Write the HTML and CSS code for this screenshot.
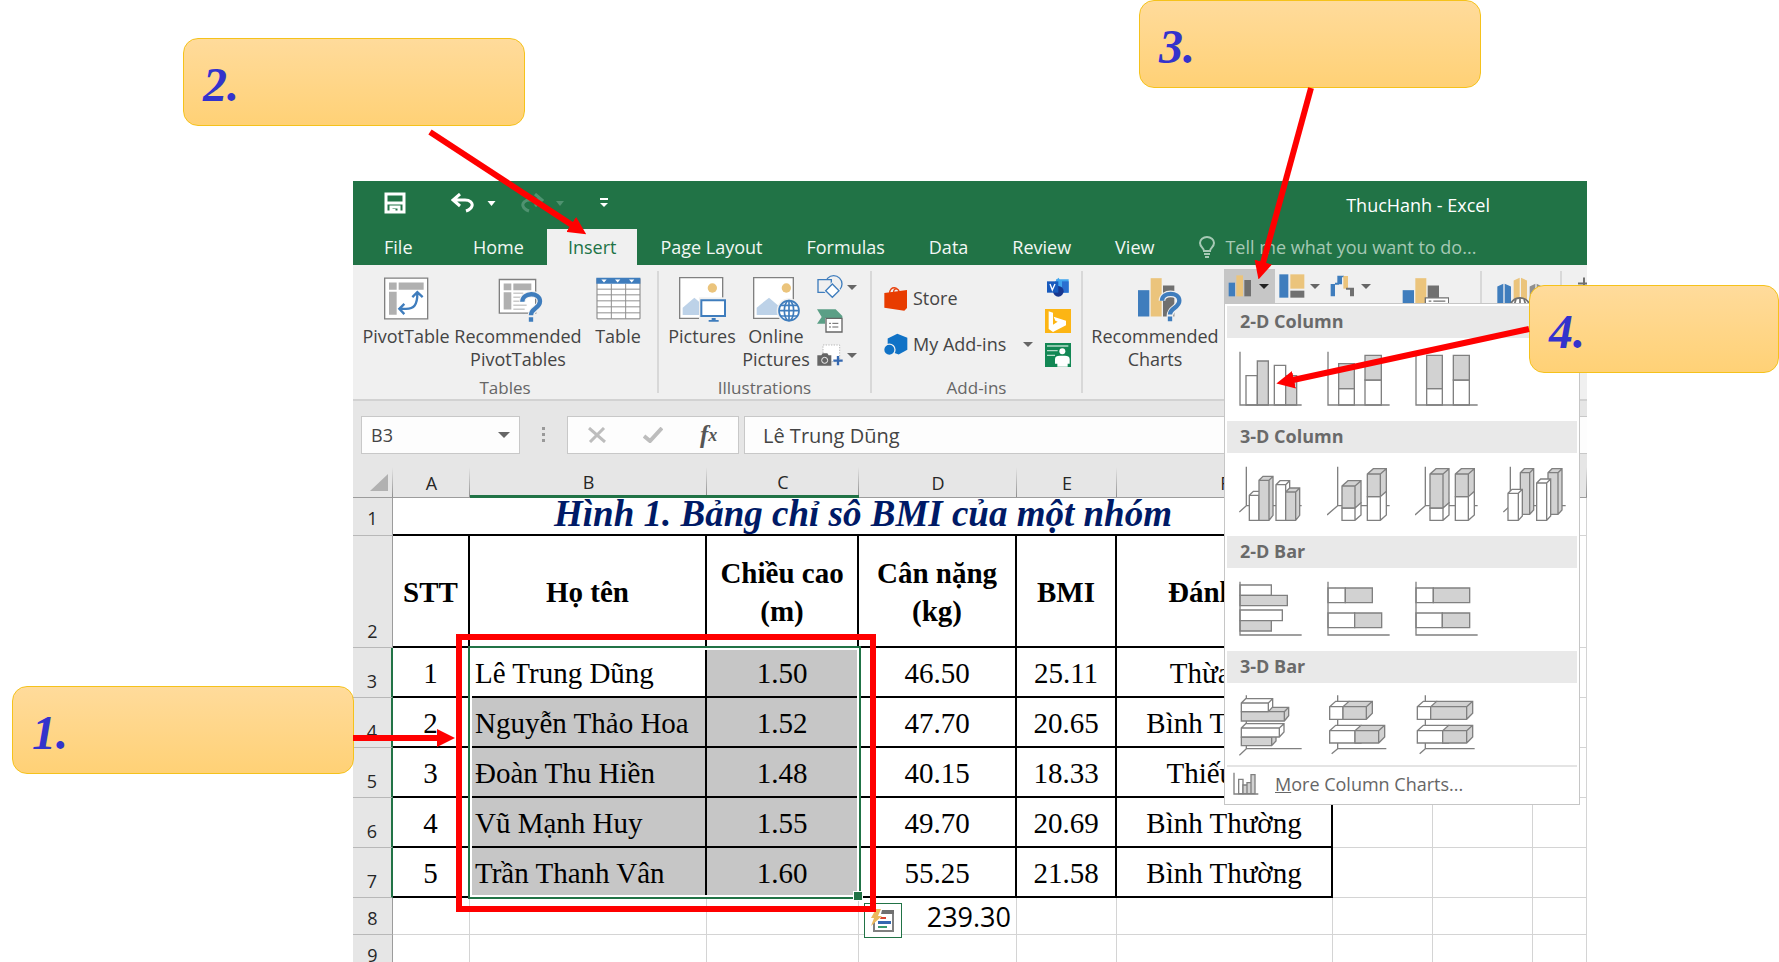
FILE: index.html
```html
<!DOCTYPE html>
<html lang="vi">
<head>
<meta charset="utf-8">
<title>ThucHanh - Excel</title>
<link rel="stylesheet" href="styles.css">
</head>
<body>
<main class="slide">
<section class="app">
  <header class="titlebar">
    <div class="quick">
      <button class="q-save" aria-label="Save"><svg width="22" height="22" viewBox="0 0 22 22" fill="none" stroke="#fff" stroke-width="3"><path d="M2 2h18v18H2zM2 11h18M7 20v-5h8v5M10 20v-3"/></svg></button>
      <button class="q-undo" aria-label="Undo"><svg width="24" height="20" viewBox="0 0 24 20" fill="none" stroke="#fff" stroke-width="3"><path d="M9 1L2 7l7 6M2 7h12c5 0 8 3 7 6-1 3-3 4-6 5"/></svg></button>
      <button class="q-drop" aria-label="Undo list"><svg width="9" height="5" viewBox="0 0 8 5"><path fill="#fff" d="M0 0h8L4 5z"/></svg></button>
      <button class="q-redo" aria-label="Redo"><svg width="24" height="20" viewBox="0 0 24 20" fill="none" stroke="#4f9270" stroke-width="3"><path d="M15 1l7 6-7 6M22 7H10C5 7 2 10 3 13c1 3 3 4 6 5"/></svg></button>
      <button class="q-drop" aria-label="Redo list"><svg width="8" height="5" viewBox="0 0 8 5"><path fill="#4f9270" d="M0 0h8L4 5z"/></svg></button>
      <button class="q-more" aria-label="Customize toolbar"><svg width="8" height="10" viewBox="0 0 8 10"><path fill="#fff" d="M0 0h8v2H0zM0 5h8L4 9z"/></svg></button>
    </div>
    <h1 class="doc">ThucHanh - Excel</h1>
  </header>
  <nav class="tabs">
    <button class="tab file">File</button>
    <button class="tab">Home</button>
    <button class="tab active">Insert</button>
    <button class="tab">Page Layout</button>
    <button class="tab">Formulas</button>
    <button class="tab">Data</button>
    <button class="tab">Review</button>
    <button class="tab">View</button>
    <label class="tell"><svg width="16" height="22" viewBox="0 0 16 22" fill="none" stroke="#a6c9b5" stroke-width="2"><path d="M5 15c0-3-4-4-4-8a7 6 0 0 1 14 0c0 4-4 5-4 8zM5 18h6M6 21h4"/></svg><input type="text" aria-label="Tell me what you want to do" placeholder="Tell me what you want to do..."></label>
  </nav>

  <div class="ribbon">
    <section class="group g-tables">
      <div class="tools">
        <button class="big w94"><svg width="45" height="44" viewBox="97 303 135 132"><path fill="#fff" stroke="#808080" stroke-width="4" d="M99 305h129v122H99z"/><path fill="#b0b0b0" d="M112 318h23v22h-23zM141 318h75v22h-75zM112 346h23v69h-23z"/><path fill="none" stroke="#3f7dbd" stroke-width="7" d="M145 397h18c24 0 34-12 34-45M158 382l-15 15 15 16M182 362l15-15 16 15"/></svg><span>PivotTable</span></button>
        <button class="big w130"><svg width="49" height="44" viewBox="435 305 147 132"><path fill="#fff" stroke="#808080" stroke-width="4" d="M451 311h109v101H451z"/><path fill="#b0b0b0" d="M464 323h23v20h-23zM493 323h54v20h-54zM464 349h23v52h-23z"/><path stroke="#b0b0b0" stroke-width="3" d="M493 352h30M493 364h25M493 376h28M493 388h40M493 400h34"/><path fill="none" stroke="#f0f0f0" stroke-width="20" d="M520 378c0-30 54-30 54-2 0 22-28 20-28 44M546 420v17"/><path fill="none" stroke="#3f7dbd" stroke-width="13" d="M520 378c0-30 53-30 53-2 0 22-27 20-27 42M546 424v14"/></svg><span>Recommended<br>PivotTables</span></button>
        <button class="big w70"><svg width="45" height="44" viewBox="739 303 135 132"><path fill="#fff" stroke="#808080" stroke-width="3" d="M742 306h129v121H742z"/><path stroke="#909090" stroke-width="3" d="M742 338h129M742 355h129M742 373h129M742 391h129M742 409h129M785 322v105M828 322v105"/><path fill="#3f7dbd" d="M740 304h132v18H740z"/><path fill="#fff" d="M755 309h16l-8 9zM796 309h16l-8 9zM838 309h16l-8 9z"/></svg><span>Table</span></button>
      </div>
      <h2>Tables</h2>
    </section>

    <section class="group g-illus">
      <div class="tools">
        <button class="big w80"><svg width="48" height="45" viewBox="985 303 144 135"><path fill="#fff" stroke="#808080" stroke-width="4" d="M990 305h129v122H990z"/><circle cx="1088" cy="336" r="14" fill="#ebc47c"/><path fill="#bdd2e8" d="M999 417v-22l35-30 30 26v26z"/><path fill="#f0f0f0" d="M1048 364h84v74h-84z"/><path fill="#fff" stroke="#3f7dbd" stroke-width="6" d="M1055 373h71v47h-71z"/><path fill="#3f7dbd" d="M1086 426h12v6h9v5h-30v-5h9z"/></svg><span>Pictures</span></button>
        <button class="big w68"><svg width="48" height="45" viewBox="1205 303 144 135"><path fill="#fff" stroke="#808080" stroke-width="4" d="M1210 305h119v122h-119z"/><circle cx="1308" cy="336" r="14" fill="#ebc47c"/><path fill="#bdd2e8" d="M1219 417v-22l37-30 30 26v26z"/><circle cx="1316" cy="404" r="37" fill="#f0f0f0"/><g fill="#fff" stroke="#3f7dbd" stroke-width="5"><circle cx="1316" cy="404" r="30"/><ellipse cx="1316" cy="404" rx="14" ry="30"/><path d="M1286 404h60M1290 388h52M1290 420h52M1316 374v60"/></g></svg><span>Online<br>Pictures</span></button>
        <div class="smalls">
          <button aria-label="Shapes"><svg width="26" height="24" viewBox="110 295 78 72" fill="#f0f0f0" stroke="#3f7dbd" stroke-width="4"><circle cx="160" cy="322" r="25"/><path d="M113 309h40v38h-40z"/><path stroke="#f0f0f0" stroke-width="10" d="M156 322l20 20-20 20-20-20z"/><path fill="#fff" d="M156 322l20 20-20 20-20-20z"/></svg><i class="caret"></i></button>
          <button aria-label="SmartArt"><svg width="26" height="24" viewBox="110 397 78 72"><path fill="#5b9f86" d="M110 398h56l20 20v6h-52v17h-24l14-20z"/><path fill="#fff" stroke="#666" stroke-width="4" d="M137 425h48v41h-48z"/><path stroke="#666" stroke-width="3" d="M146 440h6M156 440h18M146 451h6M156 451h18"/></svg></button>
          <button aria-label="Screenshot"><svg width="26" height="24" viewBox="110 505 78 68"><path fill="#fff" stroke="#999" stroke-width="2" stroke-dasharray="4 4" d="M128 509h50v50h-50z"/><path fill="#666" d="M111 540h12l4-6h14l4 6h8v31h-42z"/><circle cx="133" cy="555" r="9" fill="#666" stroke="#f0f0f0" stroke-width="3"/><path stroke="#3568b0" stroke-width="7" d="M159 556h28M173 542v28"/></svg><i class="caret"></i></button>
        </div>
      </div>
      <h2>Illustrations</h2>
    </section>

    <section class="group g-addins">
      <div class="tools">
        <div class="pair">
          <button><svg width="24" height="25" viewBox="311 328 72 75"><path fill="none" stroke="#e8430f" stroke-width="4" d="M328 350c0-24 28-20 28-2M340 346c0-14 16-12 17 2"/><path fill="#e83c00" d="M312 349l68-9v54l-8 8-60-9z"/></svg><span>Store</span></button>
          <button><svg width="24" height="23" viewBox="311 470 72 66"><path fill="#1072c6" d="M351 471l30 12v36l-26 14-33-12v-36z"/><circle cx="327" cy="519" r="17" fill="#1072c6" stroke="#f0f0f0" stroke-width="4"/></svg><span>My Add-ins</span><i class="caret"></i></button>
        </div>
        <div class="smalls">
          <button aria-label="Visio"><svg width="26" height="24" viewBox="795 295 78 72"><path fill="#41a5ee" d="M824 317l11-14 11 14zM828 308h38v40h-38z"/><path fill="#2b6fd0" d="M846 314h20v34h-20z"/><circle cx="835" cy="344" r="16" fill="#17378f"/><path fill="#185abd" d="M801 314h34v34h-34z"/><path fill="none" stroke="#fff" stroke-width="4" d="M810 322l7 18 8-18"/></svg></button>
          <button aria-label="Bing Maps"><svg width="26" height="24" viewBox="795 397 78 72"><path fill="#fcb514" d="M795 397h78v72h-78z"/><path fill="#fff" d="M806 404l13 4v36l14-9-7-3-5-12 37 12v14l-39 20-13-9z"/></svg></button>
          <button aria-label="People Graph"><svg width="26" height="24" viewBox="795 498 78 72"><path fill="#128754" d="M795 498h78v72h-78z"/><path stroke="#b5dbc9" stroke-width="4" d="M801 507h64M801 521h32M801 535h24"/><circle cx="847" cy="523" r="9" fill="#fff"/><path fill="#fff" d="M825 560v-14c0-8 6-10 14-10h16c8 0 14 3 14 10v14h-6v9h-31v-9z"/></svg></button>
        </div>
      </div>
      <h2>Add-ins</h2>
    </section>

    <section class="group g-charts">
      <div class="tools">
        <button class="big w130"><svg width="54" height="44" viewBox="1042 307 162 132"><path fill="#3f7dbd" d="M1072 345h34v79h-34z"/><path fill="#ebc47c" d="M1110 309h33v115h-33z"/><path fill="#707070" d="M1147 331h34v93h-34z"/><path fill="none" stroke="#f0f0f0" stroke-width="20" d="M1144 377c0-28 52-28 52 0 0 22-28 20-28 44M1168 421v18"/><path fill="none" stroke="#3f7dbd" stroke-width="13" d="M1144 377c0-28 52-28 52 0 0 22-28 20-28 41M1168 424v14"/></svg><span>Recommended<br>Charts</span></button>
        <div class="chartbtns">
          <div class="holder">
            <button class="cb open" aria-label="Column chart"><svg width="26" height="24" viewBox="147 295 78 72"><path fill="#3f7dbd" d="M149 321h19v41h-19z"/><path fill="#ebc47c" d="M172 299h20v63h-20z"/><path fill="#707070" d="M196 313h20v49h-20z"/></svg><i class="caret dark"></i></button>
            <div class="menu">
              <h3>2-D Column</h3>
              <div class="opts ico">
                <button aria-label="Clustered column"><svg width="63" height="55" viewBox="177 528 189 165"><path class="w" d="M198 602h34v88h-34zM283 571h34v119h-34z"/><path class="g" d="M232 558h33v132h-33zM317 602h33v88h-33z"/><path class="l" d="M180 530v160h185"/></svg></button>
                <button aria-label="Stacked column"><svg width="63" height="55" viewBox="440 528 189 165"><path class="w" d="M475 641h47v49h-47zM554 615h49v75h-49z"/><path class="g" d="M475 566h47v75h-47zM554 541h49v74h-49z"/><path class="l" d="M443 530v160h185"/></svg></button>
                <button aria-label="100% stacked column"><svg width="63" height="55" viewBox="703 528 189 165"><path class="w" d="M738 641h47v49h-47zM818 615h48v75h-48z"/><path class="g" d="M738 541h47v100h-47zM818 541h48v74h-48z"/><path class="l" d="M706 530v160h185"/></svg></button>
              </div>
              <h3>3-D Column</h3>
              <div class="opts ico">
                <button aria-label="3-D clustered column"><svg width="63" height="55" viewBox="87 197 189 165"><path class="l" d="M109 199v117l-21 19M109 316h166"/><path class="w" d="M118 285l12-12h29v75l-12 12h-29zM118 285h29v75M147 285l12-12"/><path class="g" d="M147 240l12-12h30v117l-12 15h-30zM147 240h30v120M177 240l12-12"/><path class="w" d="M198 253l12-12h29v107l-12 12h-29zM198 253h29v107M227 253l12-12"/><path class="g" d="M227 275l12-12h30v82l-12 15h-30zM227 275h30v85M257 275l12-12"/></svg></button>
                <button aria-label="3-D stacked column"><svg width="63" height="55" viewBox="349 197 189 165"><path class="l" d="M381 199v117l-32 28M381 316h156"/><path class="w" d="M394 323l18-16h39v37l-18 16h-39zM394 323h39v37M470 289l18-16h39v71l-18 16h-39zM470 289h39v71"/><path class="g" d="M394 257l18-16h39v66l-18 16h-39zM394 257h39v66M433 257l18-16M470 221l18-16h39v68l-18 16h-39zM470 221h39v68M509 221l18-16"/></svg></button>
                <button aria-label="3-D 100% stacked column"><svg width="63" height="55" viewBox="612 197 189 165"><path class="l" d="M643 199v117l-31 28M643 316h157"/><path class="w" d="M657 323l18-16h39v37l-18 16h-39zM657 323h39v37M733 289l18-16h39v71l-18 16h-39zM733 289h39v71"/><path class="g" d="M657 221l18-16h39v102l-18 16h-39zM657 221h39v102M696 221l18-16M733 221l18-16h39v68l-18 16h-39zM733 221h39v68M772 221l18-16"/></svg></button>
                <button aria-label="3-D column"><svg width="63" height="55" viewBox="875 197 189 165"><path class="l" d="M897 199v117l-21 19M897 316h166"/><path class="g" d="M927 217l12-12h28v124l-12 13h-28zM927 217h28v125M955 217l12-12M1010 217l12-12h30v124l-12 13h-30zM1010 217h30v125M1040 217l12-12"/><path class="w" d="M890 279l12-12h31v80l-12 13h-31zM890 279h31v81M921 279l12-12M976 248l12-12h30v111l-12 13h-30zM976 248h30v112M1006 248l12-12"/></svg></button>
              </div>
              <h3>2-D Bar</h3>
              <div class="opts ico">
                <button aria-label="Clustered bar"><svg width="63" height="55" viewBox="87 541 189 165"><path class="w" d="M90 553h94v31H90zM90 628h127v32H90z"/><path class="g" d="M90 584h142v31H90zM90 660h94v31H90z"/><path class="l" d="M90 543v160h185"/></svg></button>
                <button aria-label="Stacked bar"><svg width="63" height="55" viewBox="349 541 189 165"><path class="w" d="M352 562h52v44h-52zM352 637h80v44h-80z"/><path class="g" d="M404 562h81v44h-81zM432 637h81v44h-81z"/><path class="l" d="M352 543v160h185"/></svg></button>
                <button aria-label="100% stacked bar"><svg width="63" height="55" viewBox="612 541 189 165"><path class="w" d="M615 562h52v44h-52zM615 637h79v44h-79z"/><path class="g" d="M667 562h109v44H667zM694 637h82v44h-82z"/><path class="l" d="M615 543v160h185"/></svg></button>
              </div>
              <h3>3-D Bar</h3>
              <div class="opts ico">
                <button aria-label="3-D clustered bar"><svg width="63" height="61" viewBox="87 162 189 183"><path class="l" d="M109 163v160h166M109 323l-21 20"/><path class="g" d="M94 212l13-13h129v25l-13 16H94zM94 212h129v28M223 212l13-13M94 288l13-13h91v25l-13 14H94zM94 288h91v26M185 288l13-13"/><path class="w" d="M94 186l13-13h81v25l-13 14H94zM94 186h81v26M175 186l13-13M94 261l13-13h115v25l-14 15H94zM94 261h114v27M208 261l14-13"/></svg></button>
                <button aria-label="3-D stacked bar"><svg width="63" height="61" viewBox="349 162 189 183"><path class="l" d="M381 163v160h146M381 323l-18 15"/><path class="w" d="M357 197l18-16h40v54h-58zM357 197h40v38M357 269l18-16h76v53h-94zM357 269h76v37"/><path class="g" d="M397 197l18-16h70v36l-18 18h-70zM397 197h70v38M467 197l18-16M433 269l18-16h71v35l-18 18h-71zM433 269h71v37M504 269l18-16"/></svg></button>
                <button aria-label="3-D 100% stacked bar"><svg width="63" height="61" viewBox="612 162 189 183"><path class="l" d="M643 163v160h148M643 323l-17 15"/><path class="w" d="M619 197l18-16h40v54h-58zM619 197h40v38M619 269l18-16h76v53h-94zM619 269h76v37"/><path class="g" d="M659 197l18-16h108v36l-18 18H659zM659 197h108v38M767 197l18-16M695 269l18-16h72v35l-18 18h-72zM695 269h72v37M767 269l18-16"/></svg></button>
              </div>
              <button class="more ico"><svg width="26" height="24" viewBox="67 398 78 72"><path class="w" d="M84 420h13v43H84z"/><path class="g" d="M97 437h12v26H97zM109 430h12v33h-12zM121 406h12v57h-12z"/><path class="l" d="M70 400v64h73"/></svg><span><u>M</u>ore Column Charts...</span></button>
            </div>
          </div>
          <button class="cb" aria-label="Hierarchy chart"><svg width="26" height="24" viewBox="299 295 78 72"><path fill="#3f7dbd" d="M300 296h27v70h-27z"/><path fill="#ebc47c" d="M333 296h42v43h-42z"/><path fill="#707070" d="M333 345h42v21h-42z"/></svg><i class="caret"></i></button>
          <button class="cb" aria-label="Waterfall chart"><svg width="26" height="24" viewBox="452 295 78 72"><path fill="#3f7dbd" d="M454 325h13v37h-13zM467 321h12v6h-12zM474 300h14v26h-14zM486 300h8v5h-8z"/><path fill="#ebc47c" d="M492 301h14v38h-14z"/><path fill="#707070" d="M500 336h24v26h-12v-20h-12z"/></svg><i class="caret"></i></button>
        </div>
        <button class="big w80" aria-label="PivotChart"><svg width="47" height="44" viewBox="668 307 141 132"><path fill="#3f7dbd" d="M670 345h34v79h-34z"/><path fill="#ebc47c" d="M708 309h33v115h-33z"/><path fill="#707070" d="M745 331h34v93h-34z"/><path fill="#fff" stroke="#707070" stroke-width="4" d="M738 368h70v60h-70z"/><path stroke="#707070" stroke-width="4" d="M748 378h8M762 378h36"/></svg></button>
      </div>
      <h2>Charts</h2>
    </section>

    <section class="group g-tours">
      <div class="tools"><button class="big w70" aria-label="3D Map"><svg width="45" height="44" viewBox="950 303 135 132"><path fill="#3f7dbd" d="M951 330l18-8v100h-18zM973 322l19 8v92h-19z"/><path fill="#ebc47c" d="M1000 312l18-8v80h-18zM1022 304l18 8v72h-18z"/><path fill="#909090" d="M1048 330l17-8v100h-17zM1069 322l16 8v92h-16z"/><circle cx="1019" cy="395" r="31" fill="#fff" stroke="#707070" stroke-width="5"/><path fill="none" stroke="#707070" stroke-width="5" d="M1019 364v62M990 384h58M1007 368c-8 20-8 36 0 54M1031 368c8 20 8 36 0 54"/></svg></button></div>
    </section>
    <section class="group g-spark">
      <div class="tools"><button class="big" aria-label="Sparkline"><svg width="36" height="44" viewBox="0 0 36 44"><path stroke="#707070" stroke-width="2" d="M0 6h36M6 0v14"/></svg></button></div>
    </section>
  </div>

  <div class="formula">
    <label class="namebox"><input type="text" value="B3" aria-label="Name box"><i class="caret wide"></i></label>
    <i class="dots"></i>
    <div class="fx">
      <button aria-label="Cancel"><svg width="18" height="16" viewBox="0 0 18 16"><path fill="none" stroke="#bdbdbd" stroke-width="3" d="M1 1l16 14M16 1L2 15"/></svg></button>
      <button aria-label="Enter"><svg width="20" height="16" viewBox="0 0 20 16"><path fill="none" stroke="#bdbdbd" stroke-width="4" d="M1 9l6 5L19 1"/></svg></button>
      <button class="fn" aria-label="Insert function">f<small>x</small></button>
    </div>
    <input class="fvalue" type="text" value="Lê Trung Dũng" aria-label="Formula">
  </div>

  <div class="sheet">
    <table>
      <colgroup><col class="c-h"><col class="c-a"><col class="c-b"><col class="c-c"><col class="c-d"><col class="c-e"><col class="c-f"><col class="c-g"><col class="c-g"><col></colgroup>
      <thead><tr><th class="corner"><svg width="18" height="17" viewBox="0 0 18 17"><path fill="#b1b1b1" d="M18 0v17H0z"/></svg></th><th>A</th><th class="sel">B</th><th class="sel">C</th><th>D</th><th>E</th><th>F</th><th>G</th><th>H</th><th>I</th></tr></thead>
      <tbody>
        <tr class="r1"><th>1</th><td class="title" colspan="6">Hình 1. Bảng chỉ sô BMI của một nhóm</td><td></td><td></td><td></td></tr>
        <tr class="r2"><th>2</th><td class="k">STT</td><td class="k">Họ tên</td><td class="k">Chiều cao<br>(m)</td><td class="k">Cân nặng<br>(kg)</td><td class="k">BMI</td><td class="k">Đánh giá</td><td></td><td></td><td></td></tr>
        <tr class="r"><th class="s">3</th><td class="k">1</td><td class="k n">Lê Trung Dũng</td><td class="k y">1.50</td><td class="k">46.50</td><td class="k">25.11</td><td class="k">Thừa cân</td><td></td><td></td><td></td></tr>
        <tr class="r"><th class="s">4</th><td class="k">2</td><td class="k n y">Nguyễn Thảo Hoa</td><td class="k y">1.52</td><td class="k">47.70</td><td class="k">20.65</td><td class="k">Bình Thường</td><td></td><td></td><td></td></tr>
        <tr class="r"><th class="s">5</th><td class="k">3</td><td class="k n y">Đoàn Thu Hiền</td><td class="k y">1.48</td><td class="k">40.15</td><td class="k">18.33</td><td class="k">Thiếu cân</td><td></td><td></td><td></td></tr>
        <tr class="r"><th class="s">6</th><td class="k">4</td><td class="k n y">Vũ Mạnh Huy</td><td class="k y">1.55</td><td class="k">49.70</td><td class="k">20.69</td><td class="k">Bình Thường</td><td></td><td></td><td></td></tr>
        <tr class="r"><th class="s">7</th><td class="k">5</td><td class="k n y">Trần Thanh Vân</td><td class="k y">1.60</td><td class="k">55.25</td><td class="k">21.58</td><td class="k">Bình Thường</td><td></td><td></td><td></td></tr>
        <tr class="r8"><th>8</th><td></td><td></td><td></td><td class="sum">239.30</td><td></td><td></td><td></td><td></td><td></td></tr>
        <tr class="r8"><th>9</th><td></td><td></td><td></td><td></td><td></td><td></td><td></td><td></td><td></td></tr>
      </tbody>
    </table>
    <div class="selection"></div>
    <button class="qa" aria-label="Quick analysis"><svg width="24" height="24" viewBox="0 0 24 24"><path fill="#fff" stroke="#808080" stroke-width="2" d="M3 13v9h19V3H11"/><path fill="#707070" d="M11 1h12v4H10z"/><path fill="#ebb95c" d="M5 0h5L7 7h4L0 17l3-8H0z"/><path fill="#d9442f" d="M10 8h5v2h-6z"/><path fill="#3568b0" d="M7 12h13v3H7z"/><path fill="#3a9a6e" d="M7 17h9v2H7z"/></svg></button>
  </div>
</section>

<div class="frame"></div>
<p class="note n1">1.</p>
<p class="note n2">2.</p>
<p class="note n3">3.</p>
<p class="note n4">4.</p>
<svg class="arrows" width="1779" height="962" viewBox="0 0 1779 962">
  <defs><marker id="tip" markerUnits="userSpaceOnUse" markerWidth="18" markerHeight="18" refX="1" refY="9" orient="auto"><path fill="#f00" d="M0 0l18 9-18 9z"/></marker></defs>
  <g stroke="#f00" stroke-width="6">
    <path marker-end="url(#tip)" d="M353 738H438"/>
    <path marker-end="url(#tip)" d="M430 132L572 225"/>
    <path marker-end="url(#tip)" d="M1311 88L1263 263"/>
    <path marker-end="url(#tip)" d="M1529 329L1293 380"/>
  </g>
</svg>
</main>
</body>
</html>
```
FILE: styles.css
```css
* { box-sizing: border-box; }
body { margin: 0; height: 100vh; overflow: hidden; background: #fff; font-family: "Open Sans", "Noto Sans", sans-serif; font-size: 18px; color: #444; }
button, input { font: inherit; color: inherit; background: none; border: 0; padding: 0; margin: 0; }
button { display: flex; align-items: center; }
svg { display: block; flex: none; }
h1, h2, h3, p { margin: 0; font-weight: 400; font-size: inherit; }
.slide { position: relative; min-height: 100vh; padding: 181px 192px 0 353px; overflow: hidden; }
.app { overflow: clip; background: #e6e6e6; }

.titlebar { display: flex; justify-content: space-between; align-items: center; height: 48px; padding: 0 97px 0 31px; background: #217346; color: #fff; }
.quick { display: flex; align-items: center; padding-bottom: 4px; }
.q-undo { margin-left: 45px; }
.q-drop { margin-left: 12px; }
.q-redo { margin-left: 24px; }
.q-more { margin-left: 36px; }

.tabs { display: flex; gap: 2px; height: 36px; background: #217346; color: #f2f7f4; white-space: nowrap; }
.tab { padding: 0 21px; }
.tab.file { width: 97px; padding: 0 0 0 31px; }
.tab.active { background: #f0f0f0; color: #217346; }
.tell { display: flex; align-items: center; gap: 10px; flex: 1; min-width: 0; margin-left: 22px; }
.tell input { flex: 1; min-width: 0; }
.tell input::placeholder { color: #a6c9b5; opacity: 1; }

.ribbon { display: flex; height: 136px; background: #f0f0f0; border-bottom: 2px solid #d2d2d2; }
.group { position: relative; display: flex; flex-direction: column; flex: none; margin: 6px 0; padding-top: 4px; border-right: 2px solid #d8d8d8; }
.group h2 { text-align: center; line-height: 24px; color: #666; font-size: 17px; }
.tools { display: flex; flex: none; height: 101px; padding-left: 6px; }
.g-tables { width: 306px; }
.g-illus { width: 213px; }
.g-illus .tools { padding-left: 3px; }
.g-addins { width: 211px; }
.g-addins .tools { padding-left: 12px; }
.g-charts { width: 399px; }
.g-charts .tools { padding-left: 7px; }
.g-tours { width: 80px; }
.g-tours .tools { padding-left: 2px; }
.g-spark { width: 80px; border: 0; }
.g-spark .tools { padding-left: 16px; }
.big { flex: none; flex-direction: column; padding-top: 2px; line-height: 23px; text-align: center; white-space: nowrap; }
.big svg { height: 45px; margin-bottom: 3px; }
.w94 { width: 94px; } .w130 { width: 130px; } .w70 { width: 70px; } .w80 { width: 80px; } .w68 { width: 68px; }
.caret { flex: none; width: 0; height: 0; border: 5px solid transparent; border-top-color: #666; border-bottom: 0; }
.caret.dark { border-top-color: #222; }
.caret.wide { border-width: 6px 6px 0; }
.smalls { display: flex; flex-direction: column; gap: 10px; margin-left: 7px; }
.smalls button { gap: 4px; height: 24px; }
.pair { display: flex; flex-direction: column; gap: 22px; width: 155px; padding-top: 11px; white-space: nowrap; }
.pair button { gap: 5px; height: 24px; }
.pair .caret { margin-left: 12px; }
.pair + .smalls { margin-left: 6px; }
.chartbtns { display: flex; height: 34px; margin: -6px 0 0 4px; }
.holder { position: relative; }
.cb { gap: 5px; width: 51px; height: 34px; padding-left: 4px; }
.cb.open { background: #c6c6c6; }
.g-charts > .tools > .big:last-child { margin-left: 8px; }

.menu { position: absolute; z-index: 2; top: 34px; left: 0; width: 356px; padding: 2px; background: #fff; border: 1px solid #c6c6c6; }
.menu h3 { height: 32px; padding-left: 13px; line-height: 31px; background: #e9e9e9; font-weight: 700; color: #6a6a6a; }
.opts { display: flex; gap: 25px; height: 83px; padding: 13px 0 0 12px; align-items: flex-start; }
.opts:nth-of-type(4) { height: 82px; padding-top: 12px; }
.ico .w { fill: #fff; } .ico .g { fill: #d2d2d2; } .ico .l { fill: none; }
.ico path { stroke: #808080; stroke-width: 4; }
.more { width: 100%; height: 37px; gap: 16px; padding: 0 0 2px 6px; border-top: 2px solid #e4e4e4; color: #666; }

.formula { display: flex; height: 61px; padding: 15px 0 8px 8px; color: #444; }
.namebox, .fx, .fvalue { background: #fdfdfd; border: 1px solid #c8c8c8; }
.namebox { display: flex; align-items: center; width: 159px; padding: 0 9px; }
.namebox input { flex: 1; min-width: 0; }
.dots { width: 3px; height: 16px; margin: 11px 22px; background: repeating-linear-gradient(#999 0 3px, transparent 3px 6px); }
.fx { display: flex; align-items: center; width: 172px; padding-left: 20px; gap: 37px; }
.fn { font: italic 700 25px/30px "Liberation Serif", serif; color: #555; }
.fn small { font-size: 18px; }
.fvalue { flex: 1; min-width: 0; margin-left: 5px; padding-left: 18px; border-right: 0; font-size: 20px; }

.sheet { position: relative; }
table { width: 100%; table-layout: fixed; border-collapse: separate; border-spacing: 0; background: #fff; }
.c-h { width: 40px; } .c-a { width: 77px; } .c-b { width: 237px; } .c-c { width: 152px; } .c-d { width: 158px; } .c-e { width: 100px; } .c-f { width: 216px; } .c-g { width: 100px; }
th, td { padding: 0; overflow: hidden; white-space: nowrap; }
th { font-weight: 400; color: #262626; background: #e6e6e6; }
thead th { height: 36px; line-height: 24px; padding-top: 6px; border-bottom: 1px solid #9c9c9c; background: linear-gradient(transparent 15%, #8f8f8f) right / 1px 100% no-repeat #e6e6e6; }
thead .sel { border-bottom: 3px solid #217346; }
.corner svg { margin: 0 5px 0 auto; }
tbody th { vertical-align: bottom; line-height: 24px; padding-bottom: 4px; border-right: 1px solid #9c9c9c; border-bottom: 1px solid #b8b8b8; }
tbody th.s { border-right: 2px solid #217346; }
td { border-right: 1px solid #d4d4d4; border-bottom: 1px solid #d4d4d4; text-align: center; font-family: "Liberation Serif", serif; font-size: 29px; line-height: 38px; color: #000; }
td.k, td.title { border-right: 2px solid #000; border-bottom: 2px solid #000; }
td.k { padding-top: 2px; }
.r1 { height: 38px; }
td.title { overflow: visible; vertical-align: top; border-right: 0; font-weight: 700; font-style: italic; font-size: 37px; color: #001a66; }
.r1 td { line-height: 32px; }
.r1 th { padding-bottom: 5px; }
.r2 { height: 112px; }
.r2 td { font-weight: 700; }
.r { height: 50px; }
.r8 { height: 37px; }
.r8 td { line-height: 34px; }
td.n { padding-left: 5px; text-align: left; }
td.y { background: #c6c6c6; }
td.sum { padding: 2px 5px 0 0; text-align: right; font-family: "Open Sans", sans-serif; font-size: 27px; }
.selection { position: absolute; left: 115px; top: 184px; width: 393px; height: 253px; border: 2px solid #217346; box-shadow: inset 0 0 0 2px #fff; }
.selection::after { content: ""; position: absolute; right: -3px; bottom: -3px; width: 8px; height: 8px; background: #217346; box-shadow: 0 0 0 1px #fff; }
.qa { position: absolute; left: 511px; top: 441px; width: 38px; height: 35px; justify-content: center; background: #fff; border: 1px solid #217346; }

.frame { position: absolute; left: 456px; top: 634px; width: 420px; height: 278px; border: 6px solid #f00; }
.note { position: absolute; z-index: 3; width: 342px; height: 88px; padding: 2px 19px 0; border: 1px solid #f5c21b; border-radius: 15px; background: linear-gradient(#ffdb9b, #ffd176); color: #3333cc; font: italic 700 48px/88px "Liberation Serif", serif; }
.n1 { left: 12px; top: 686px; }
.n2 { left: 183px; top: 38px; }
.n3 { left: 1139px; top: 0; }
.n4 { left: 1529px; top: 285px; width: 250px; }
.arrows { position: absolute; z-index: 4; left: 0; top: 0; pointer-events: none; }
```
